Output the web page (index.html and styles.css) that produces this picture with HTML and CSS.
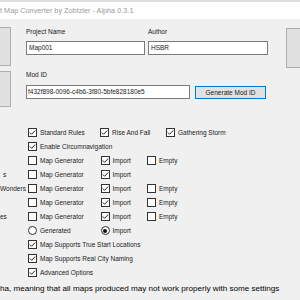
FILE: index.html
```html
<!DOCTYPE html>
<html>
<head>
<meta charset="utf-8">
<link rel="stylesheet" href="styles.css">
</head>
<body>
<div class="screen">
  <div class="topstrip"></div>
  <div class="titlebar"><span class="title">t Map Converter by Zobtzler - Alpha 0.3.1</span></div>
  <div class="client">
    <div class="upper">
      <div class="leftbtns">
        <div class="sidebtn tall"></div>
        <div class="sidebtn short"></div>
      </div>
      <div class="form">
        <div class="fieldrow">
          <div class="field name">
            <div class="lbl">Project Name</div>
            <div class="input">Map001</div>
          </div>
          <div class="field author">
            <div class="lbl">Author</div>
            <div class="input">HSBR</div>
          </div>
        </div>
        <div class="field modid">
          <div class="lbl">Mod ID</div>
          <div class="idrow">
            <div class="input idinput">f432f898-0096-c4b6-3f80-5bfe828180e5</div>
            <div class="btn">Generate Mod ID</div>
          </div>
        </div>
      </div>
      <div class="rightbtn"></div>
    </div>

    <div class="options">
      <div class="row first">
        <div class="opt w72"><svg class="cb" viewBox="0 0 9 9"><rect x="0.5" y="0.5" width="8" height="8"/><path d="M1.8 4.5 L3.6 6.3 L7.2 2.5"/></svg><span>Standard Rules</span></div>
        <div class="opt w66"><svg class="cb" viewBox="0 0 9 9"><rect x="0.5" y="0.5" width="8" height="8"/><path d="M1.8 4.5 L3.6 6.3 L7.2 2.5"/></svg><span>Rise And Fall</span></div>
        <div class="opt"><svg class="cb" viewBox="0 0 9 9"><rect x="0.5" y="0.5" width="8" height="8"/><path d="M1.8 4.5 L3.6 6.3 L7.2 2.5"/></svg><span>Gathering Storm</span></div>
      </div>
      <div class="row">
        <div class="side"></div>
        <div class="opt"><svg class="cb" viewBox="0 0 9 9"><rect x="0.5" y="0.5" width="8" height="8"/><path d="M1.8 4.5 L3.6 6.3 L7.2 2.5"/></svg><span>Enable Circumnavigation</span></div>
      </div>
      <div class="row grid3">
        <div class="side"></div>
        <div class="opt"><svg class="cb" viewBox="0 0 9 9"><rect x="0.5" y="0.5" width="8" height="8"/></svg><span>Map Generator</span></div>
        <div class="opt"><svg class="cb" viewBox="0 0 9 9"><rect x="0.5" y="0.5" width="8" height="8"/><path d="M1.8 4.5 L3.6 6.3 L7.2 2.5"/></svg><span>Import</span></div>
        <div class="opt"><svg class="cb" viewBox="0 0 9 9"><rect x="0.5" y="0.5" width="8" height="8"/></svg><span>Empty</span></div>
      </div>
      <div class="row grid3">
        <div class="side"><span class="cut-s">s</span></div>
        <div class="opt"><svg class="cb" viewBox="0 0 9 9"><rect x="0.5" y="0.5" width="8" height="8"/></svg><span>Map Generator</span></div>
        <div class="opt"><svg class="cb" viewBox="0 0 9 9"><rect x="0.5" y="0.5" width="8" height="8"/><path d="M1.8 4.5 L3.6 6.3 L7.2 2.5"/></svg><span>Import</span></div>
        <div class="opt"></div>
      </div>
      <div class="row grid3">
        <div class="side"><span class="cut-w">Wonders</span></div>
        <div class="opt"><svg class="cb" viewBox="0 0 9 9"><rect x="0.5" y="0.5" width="8" height="8"/></svg><span>Map Generator</span></div>
        <div class="opt"><svg class="cb" viewBox="0 0 9 9"><rect x="0.5" y="0.5" width="8" height="8"/><path d="M1.8 4.5 L3.6 6.3 L7.2 2.5"/></svg><span>Import</span></div>
        <div class="opt"><svg class="cb" viewBox="0 0 9 9"><rect x="0.5" y="0.5" width="8" height="8"/></svg><span>Empty</span></div>
      </div>
      <div class="row grid3">
        <div class="side"></div>
        <div class="opt"><svg class="cb" viewBox="0 0 9 9"><rect x="0.5" y="0.5" width="8" height="8"/></svg><span>Map Generator</span></div>
        <div class="opt"><svg class="cb" viewBox="0 0 9 9"><rect x="0.5" y="0.5" width="8" height="8"/><path d="M1.8 4.5 L3.6 6.3 L7.2 2.5"/></svg><span>Import</span></div>
        <div class="opt"><svg class="cb" viewBox="0 0 9 9"><rect x="0.5" y="0.5" width="8" height="8"/></svg><span>Empty</span></div>
      </div>
      <div class="row grid3">
        <div class="side"><span class="cut-es">es</span></div>
        <div class="opt"><svg class="cb" viewBox="0 0 9 9"><rect x="0.5" y="0.5" width="8" height="8"/></svg><span>Map Generator</span></div>
        <div class="opt"><svg class="cb" viewBox="0 0 9 9"><rect x="0.5" y="0.5" width="8" height="8"/><path d="M1.8 4.5 L3.6 6.3 L7.2 2.5"/></svg><span>Import</span></div>
        <div class="opt"><svg class="cb" viewBox="0 0 9 9"><rect x="0.5" y="0.5" width="8" height="8"/></svg><span>Empty</span></div>
      </div>
      <div class="row grid3">
        <div class="side"></div>
        <div class="opt"><span class="radio"></span><span>Generated</span></div>
        <div class="opt"><span class="radio on"></span><span>Import</span></div>
        <div class="opt"></div>
      </div>
      <div class="row">
        <div class="side"></div>
        <div class="opt"><svg class="cb" viewBox="0 0 9 9"><rect x="0.5" y="0.5" width="8" height="8"/><path d="M1.8 4.5 L3.6 6.3 L7.2 2.5"/></svg><span>Map Supports True Start Locations</span></div>
      </div>
      <div class="row">
        <div class="side"></div>
        <div class="opt"><svg class="cb" viewBox="0 0 9 9"><rect x="0.5" y="0.5" width="8" height="8"/><path d="M1.8 4.5 L3.6 6.3 L7.2 2.5"/></svg><span>Map Supports Real City Naming</span></div>
      </div>
      <div class="row">
        <div class="side"></div>
        <div class="opt"><svg class="cb" viewBox="0 0 9 9"><rect x="0.5" y="0.5" width="8" height="8"/><path d="M1.8 4.5 L3.6 6.3 L7.2 2.5"/></svg><span>Advanced Options</span></div>
      </div>
    </div>

    <div class="note">ha, meaning that all maps produced may not work properly with some settings</div>
  </div>
</div>
</body>
</html>
```

FILE: styles.css
```css
html, body {
  margin: 0;
  padding: 0;
}
body {
  width: 300px;
  height: 300px;
  overflow: hidden;
  background: #f0f0f0;
  font-family: "Liberation Sans", Arial, sans-serif;
  font-size: 6.5px;
  color: #1a1a1a;
}
.screen {
  width: 300px;
  height: 300px;
  display: flex;
  flex-direction: column;
  overflow: hidden;
}
.topstrip {
  height: 2px;
  background: #dcdcdc;
  flex: none;
}
.titlebar {
  height: 17px;
  flex: none;
  background: #ffffff;
  display: flex;
  align-items: center;
  white-space: nowrap;
}
.title {
  font-size: 7.3px;
  color: #9b9b9b;
}
.client {
  flex: 1;
  display: flex;
  flex-direction: column;
}
.upper {
  display: flex;
  height: 88px;
  flex: none;
}
.leftbtns {
  width: 13px;
  margin-left: -2px;
  padding-top: 8px;
  display: flex;
  flex-direction: column;
  gap: 5px;
  flex: none;
}
.sidebtn {
  background: #e1e1e1;
  border: 1px solid #adadad;
  box-sizing: border-box;
}
.sidebtn.tall { height: 40px; }
.sidebtn.short { height: 36px; }
.form {
  margin-left: 15px;
  padding-top: 8px;
  width: 259px;
  flex: none;
}
.fieldrow {
  display: flex;
  gap: 3px;
}
.lbl {
  height: 10px;
  line-height: 10px;
  margin-bottom: 4px;
  white-space: nowrap;
}
.input {
  box-sizing: border-box;
  height: 14px;
  border: 1px solid #7a7a7a;
  background: #fff;
  line-height: 12px;
  padding-left: 2px;
  white-space: nowrap;
  overflow: hidden;
}
.field.name .input { width: 119px; }
.field.author .input { width: 120px; }
.field.modid {
  margin-top: 15px;
}
.field.modid .lbl { margin-bottom: 5px; }
.idrow {
  display: flex;
  align-items: flex-start;
  gap: 5px;
}
.idinput {
  width: 164px;
  padding-left: 1px;
}
.btn {
  margin-top: 1px;
  box-sizing: border-box;
  width: 71px;
  height: 13px;
  line-height: 11px;
  border: 1px solid #0078d7;
  background: #e1e1e1;
  text-align: center;
  white-space: nowrap;
}
.rightbtn {
  margin-left: 1px;
  margin-top: 9px;
  width: 16px;
  height: 40px;
  box-sizing: border-box;
  background: #e1e1e1;
  border: 1px solid #adadad;
  flex: none;
}
.options {
  margin-top: 18px;
  display: flex;
  flex-direction: column;
}
.row {
  height: 14.1px;
  display: flex;
  align-items: center;
  white-space: nowrap;
}
.row.first {
  padding-left: 28px;
}
.side {
  width: 28px;
  flex: none;
  height: 100%;
  display: flex;
  align-items: center;
}
.grid3 {
  display: grid;
  grid-template-columns: 28px 72.5px 46.5px auto;
  align-items: center;
}
.opt {
  display: flex;
  align-items: center;
  gap: 3px;
}
.w72 { width: 72px; flex: none; }
.w66 { width: 66px; flex: none; }
.cb {
  width: 9px;
  height: 9px;
  flex: none;
}
.cb rect {
  fill: #ffffff;
  stroke: #333333;
  stroke-width: 1;
}
.cb path {
  fill: none;
  stroke: #222222;
  stroke-width: 1;
}
.radio {
  width: 9px;
  height: 9px;
  box-sizing: border-box;
  border: 1px solid #333;
  border-radius: 50%;
  background: #fff;
  flex: none;
  display: flex;
  align-items: center;
  justify-content: center;
}
.radio.on::after {
  content: "";
  width: 4px;
  height: 4px;
  border-radius: 50%;
  background: #111;
}
.cut-s { margin-left: 3px; }
.cut-w { margin-left: 0; }
.cut-es { margin-left: 0; }
.note {
  margin-top: 3px;
  height: 12px;
  line-height: 12px;
  font-size: 8.1px;
  color: #000;
  white-space: nowrap;
}
```
